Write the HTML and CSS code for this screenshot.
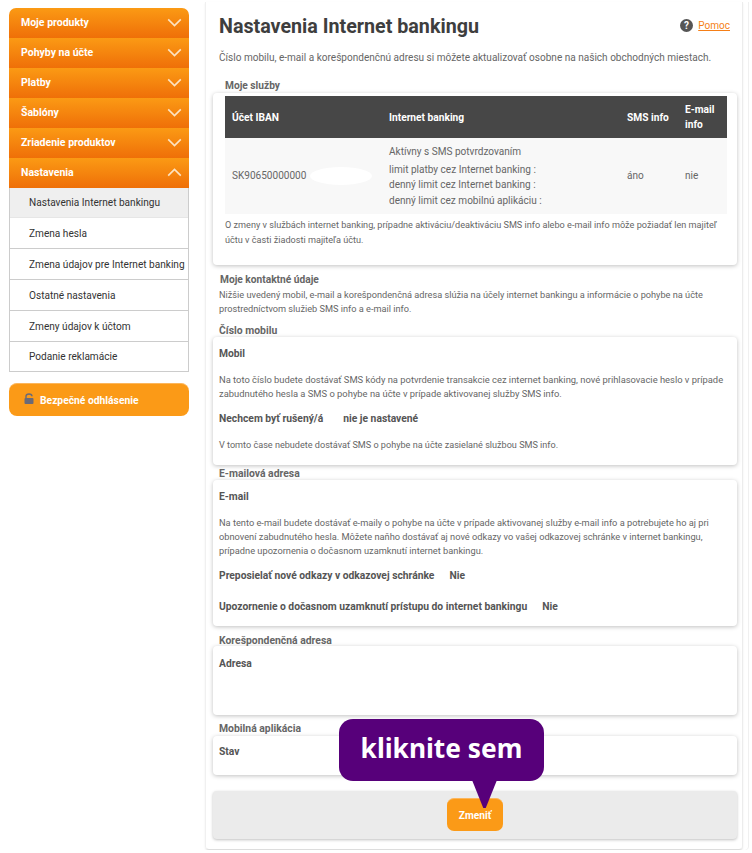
FILE: index.html
```html
<!DOCTYPE html>
<html lang="sk">
<head>
    <meta charset="UTF-8">
    <title>Nastavenia Internet bankingu</title>
    <link rel="stylesheet" href="styles.css">
</head>
<body>
<div class="page">
    <div class="sidebar">
        <div class="menu">
            <div class="menu_head">Moje produkty <svg class="chev" viewBox="0 0 16 10"><path d="M1 1.5l7 7 7-7"/></svg></div>
            <div class="menu_head">Pohyby na účte <svg class="chev" viewBox="0 0 16 10"><path d="M1 1.5l7 7 7-7"/></svg></div>
            <div class="menu_head">Platby <svg class="chev" viewBox="0 0 16 10"><path d="M1 1.5l7 7 7-7"/></svg></div>
            <div class="menu_head">Šablóny <svg class="chev" viewBox="0 0 16 10"><path d="M1 1.5l7 7 7-7"/></svg></div>
            <div class="menu_head">Zriadenie produktov <svg class="chev" viewBox="0 0 16 10"><path d="M1 1.5l7 7 7-7"/></svg></div>
            <div class="menu_head">Nastavenia <svg class="chev" viewBox="0 0 16 10"><path d="M1 8.5l7-7 7 7"/></svg></div>
            <div class="submenu">
                <div class="sub_item active">Nastavenia Internet bankingu</div>
                <div class="sub_item">Zmena hesla</div>
                <div class="sub_item">Zmena údajov pre Internet banking</div>
                <div class="sub_item">Ostatné nastavenia</div>
                <div class="sub_item">Zmeny údajov k účtom</div>
                <div class="sub_item">Podanie reklamácie</div>
            </div>
        </div>
        <div class="logout">
            <svg class="lock" viewBox="0 0 10 11"><path class="shackle" d="M2 5V3.2C2 1.8 3.2 1 5 1s3 .8 3 2.2"/><rect x="0.5" y="5" width="9" height="6" rx="1"/></svg>
            Bezpečné odhlásenie
        </div>
    </div>

    <div class="main">
        <div class="title_row">
            <h1>Nastavenia Internet bankingu</h1>
            <div class="help">
                <svg class="help_icon" viewBox="0 0 13 13"><circle cx="6.5" cy="6.5" r="6.5"/><text x="6.5" y="10" text-anchor="middle">?</text></svg>
                <a href="#">Pomoc</a>
            </div>
        </div>
        <p class="intro">Číslo mobilu, e-mail a korešpondenčnú adresu si môžete aktualizovať osobne na našich obchodných miestach.</p>

        <div class="services_label">Moje služby</div>
        <div class="card services">
            <table>
                <tr class="thead">
                    <th class="c1">Účet IBAN</th>
                    <th class="c2">Internet banking</th>
                    <th class="c3">SMS info</th>
                    <th class="c4">E-mail info</th>
                </tr>
                <tr class="tbody">
                    <td>SK90650000000</td>
                    <td>
                        <div class="active_line">Aktívny s SMS potvrdzovaním</div>
                        limit platby cez Internet banking :<br>
                        denný limit cez Internet banking :<br>
                        denný limit cez mobilnú aplikáciu :
                    </td>
                    <td>áno</td>
                    <td>nie</td>
                </tr>
            </table>
            <p class="services_note">O zmeny v službách internet banking, prípadne aktiváciu/deaktiváciu SMS info alebo e-mail info môže požiadať len majiteľ účtu v časti žiadosti majiteľa účtu.</p>
            <div class="blob"></div>
        </div>

        <div class="contact_label">Moje kontaktné údaje</div>
        <p class="contact_text">Nižšie uvedený mobil, e-mail a korešpondenčná adresa slúžia na účely internet bankingu a informácie o pohybe na účte prostredníctvom služieb SMS info a e-mail info.</p>

        <div class="label first">Číslo mobilu</div>
        <div class="card box mobile_box">
            <b>Mobil</b>
            <p class="p_mobil">Na toto číslo budete dostávať SMS kódy na potvrdenie transakcie cez internet banking, nové prihlasovacie heslo v prípade zabudnutého hesla a SMS o pohybe na účte v prípade aktivovanej služby SMS info.</p>
            <div class="pair"><b>Nechcem byť rušený/á</b><b>nie je nastavené</b></div>
            <p class="p_quiet">V tomto čase nebudete dostávať SMS o pohybe na účte zasielané službou SMS info.</p>
        </div>

        <div class="label mail_label">E-mailová adresa</div>
        <div class="card box mail_box">
            <b>E-mail</b>
            <p class="p_mail">Na tento e-mail budete dostávať e-maily o pohybe na účte v prípade aktivovanej služby e-mail info a potrebujete ho aj pri obnovení zabudnutého hesla. Môžete naňho dostávať aj nové odkazy vo vašej odkazovej schránke v internet bankingu, prípadne upozornenia o dočasnom uzamknutí internet bankingu.</p>
            <div class="pair p_forward"><b>Preposielať nové odkazy v odkazovej schránke</b><b>Nie</b></div>
            <div class="pair p_lock"><b>Upozornenie o dočasnom uzamknutí prístupu do internet bankingu</b><b>Nie</b></div>
        </div>

        <div class="label addr_label">Korešpondenčná adresa</div>
        <div class="card box addr_box"><b>Adresa</b></div>

        <div class="label app_label">Mobilná aplikácia</div>
        <div class="card box app_box"><b>Stav</b></div>

        <div class="actions">
            <button type="button" class="btn">Zmeniť</button>
        </div>

        <div class="callout">kliknite sem</div>
    </div>
</div>
</body>
</html>
```

FILE: styles.css
```css
body{
    font-family: Roboto, "Liberation Sans", sans-serif;
    font-size: 10.05px;
    color: #666;
    margin: 0px;
    background: white;
}
p{
    margin: 0;
}
b{
    color: #555;
    font-size: 10.3px;
}
.page{
    display: flex;
    align-items: flex-start;
    padding: 8px 0 0 9px;
}
.sidebar{
    width: 180px;
    flex: none;
}
.menu_head{
    height: 30px;
    box-sizing: border-box;
    padding: 0 7px 2px 12px;
    background: linear-gradient(#fb9a14, #ef6f08);
    color: white;
    font-weight: bold;
    font-size: 10.5px;
    display: flex;
    align-items: center;
    justify-content: space-between;
}
.menu_head:first-child{
    border-radius: 7px 7px 0 0;
}
.chev{
    width: 15px;
    height: 9px;
    fill: none;
    stroke: #fde3c2;
    stroke-width: 1.8;
}
.submenu{
    border: 1px solid #ccc;
    border-top: 0;
}
.sub_item{
    height: 31px;
    box-sizing: border-box;
    border-bottom: 1px solid #ccc;
    padding-left: 19px;
    display: flex;
    align-items: center;
    color: #333;
    font-size: 10.1px;
    white-space: nowrap;
}
.sub_item:last-child{
    border-bottom: 0;
    height: 29px;
}
.sub_item.active{
    background: #efefef;
    border-bottom-color: #e6e6e6;
    height: 30px;
}
.logout{
    margin-top: 11px;
    height: 33px;
    background: #fb9a17;
    border-radius: 8px;
    border-top: 1px solid #fcb65c;
    box-sizing: border-box;
    padding-left: 15px;
    display: flex;
    align-items: center;
    gap: 6px;
    color: white;
    font-size: 10.3px;
    font-weight: bold;
}
.lock{
    width: 10px;
    height: 11px;
    margin-top: -3px;
    fill: #6a6a78;
}
.shackle{
    fill: none;
    stroke: #6a6a78;
    stroke-width: 1.4;
}
.main{
    position: relative;
    width: 538px;
    height: 848px;
    margin-left: 16px;
    margin-top: -6px;
    box-sizing: border-box;
    padding: 0 5px 0 7px;
    border-left: 1px solid #f0f0f0;
    border-right: 1px solid #ececec;
    border-bottom: 1px solid #ddd;
    border-radius: 0 0 4px 4px;
    box-shadow: 0 1px 2px rgba(0,0,0,0.08), 5px 0 0 white, 6px 0 0 #f0f0f0;
}
.title_row{
    display: flex;
    justify-content: space-between;
    padding: 11px 7px 0 6px;
    height: 30px;
}
h1{
    margin: 0;
    font-size: 19.7px;
    line-height: 28px;
    font-weight: bold;
    color: #3e3e3e;
}
.help{
    display: flex;
    gap: 5px;
    align-items: center;
    height: 14px;
    margin-top: 5px;
}
.help_icon{
    width: 13px;
    height: 13px;
    fill: #555;
}
.help_icon text{
    fill: white;
    font-size: 10px;
    font-weight: bold;
}
.help a{
    color: #f57f17;
}
.intro{
    margin: 7px 0 0 6px;
    line-height: 15px;
}
.services_label{
    margin: 14px 0 0 12px;
    font-size: 10.2px;
    font-weight: bold;
    color: #666;
    line-height: 14px;
}
.card{
    background: white;
    border-radius: 4px;
    box-shadow: 0 1px 4px rgba(0,0,0,0.25);
}
.services{
    position: relative;
    padding: 3px 11px 0 12px;
    height: 172px;
    box-sizing: border-box;
}
table{
    width: 502px;
    border-collapse: collapse;
    table-layout: fixed;
}
.thead{
    background: #474747;
    color: white;
    height: 42px;
}
th{
    text-align: left;
    font-size: 10.2px;
    font-weight: bold;
    padding: 0 0 0 7px;
    line-height: 15px;
}
.c1{
    width: 150px;
}
.c3{
    width: 51px;
}
.c4{
    width: 42px;
}
.tbody{
    background: #f8f8f8;
    height: 76px;
}
td{
    padding: 0 0 0 7px;
    line-height: 15.5px;
}
.active_line{
    margin-bottom: 2px;
}
.services_note{
    margin-top: 4px;
    font-size: 9.15px;
    line-height: 15px;
}
.blob{
    position: absolute;
    left: 97px;
    top: 74px;
    width: 62px;
    height: 18px;
    background: white;
    border-radius: 50%;
}
.contact_label{
    margin: 8px 0 0 7px;
    font-size: 10.2px;
    font-weight: bold;
    line-height: 14px;
}
.contact_text{
    margin: 1px 0 0 6px;
    font-size: 9.2px;
    line-height: 14px;
    width: 505px;
}
.label{
    margin: 8px 0 0 6px;
    font-size: 10.4px;
    font-weight: bold;
    line-height: 14px;
}
.label.first{
    margin: 8px 0 -1px 6px;
}
.box{
    padding: 10px 6px 0 6px;
    box-sizing: border-box;
    line-height: 14px;
}
.mobile_box{
    height: 128px;
}
.p_mobil{
    margin-top: 12px;
    font-size: 9.4px;
}
.pair{
    display: flex;
    gap: 20px;
}
.mobile_box .pair{
    margin-top: 11px;
}
.p_quiet{
    margin-top: 12px;
    font-size: 9.1px;
}
.mail_label{
    margin: 2px 0 -1px 6px;
}
.mail_box{
    height: 146px;
}
.p_mail{
    margin-top: 12px;
    font-size: 9.25px;
}
.p_forward{
    margin-top: 11px;
    gap: 15px;
}
.p_lock{
    margin-top: 17px;
    gap: 15px;
}
.addr_label{
    margin: 8px 0 -2px 6px;
}
.addr_box{
    height: 69px;
    padding-top: 11px;
}
.app_label{
    margin-top: 7px;
}
.app_box{
    height: 39px;
    padding-top: 9px;
}
.actions{
    margin-top: 16px;
    height: 48px;
    background: #ebebeb;
    border-radius: 4px;
    box-shadow: 0 1px 3px rgba(0,0,0,0.25);
    display: flex;
    justify-content: center;
    padding-top: 7px;
    box-sizing: border-box;
}
.btn{
    width: 56px;
    height: 33px;
    background: #fb9a17;
    border: 0;
    border-top: 1px solid #fcb65c;
    border-radius: 7px;
    color: white;
    font-family: inherit;
    font-size: 10.2px;
    font-weight: bold;
}
.callout{
    position: absolute;
    left: 133px;
    top: 717px;
    width: 205px;
    height: 62px;
    background: #57007a;
    border-radius: 14px;
    color: white;
    font-family: "Noto Sans", sans-serif;
    font-size: 26.3px;
    font-weight: bold;
    line-height: 58px;
    text-align: center;
}
.callout::after{
    content: "";
    position: absolute;
    left: 133px;
    top: 61px;
    width: 25px;
    height: 28px;
    background: #57007a;
    clip-path: polygon(0 0, 100% 0, 55% 100%, 45% 100%);
}
```
